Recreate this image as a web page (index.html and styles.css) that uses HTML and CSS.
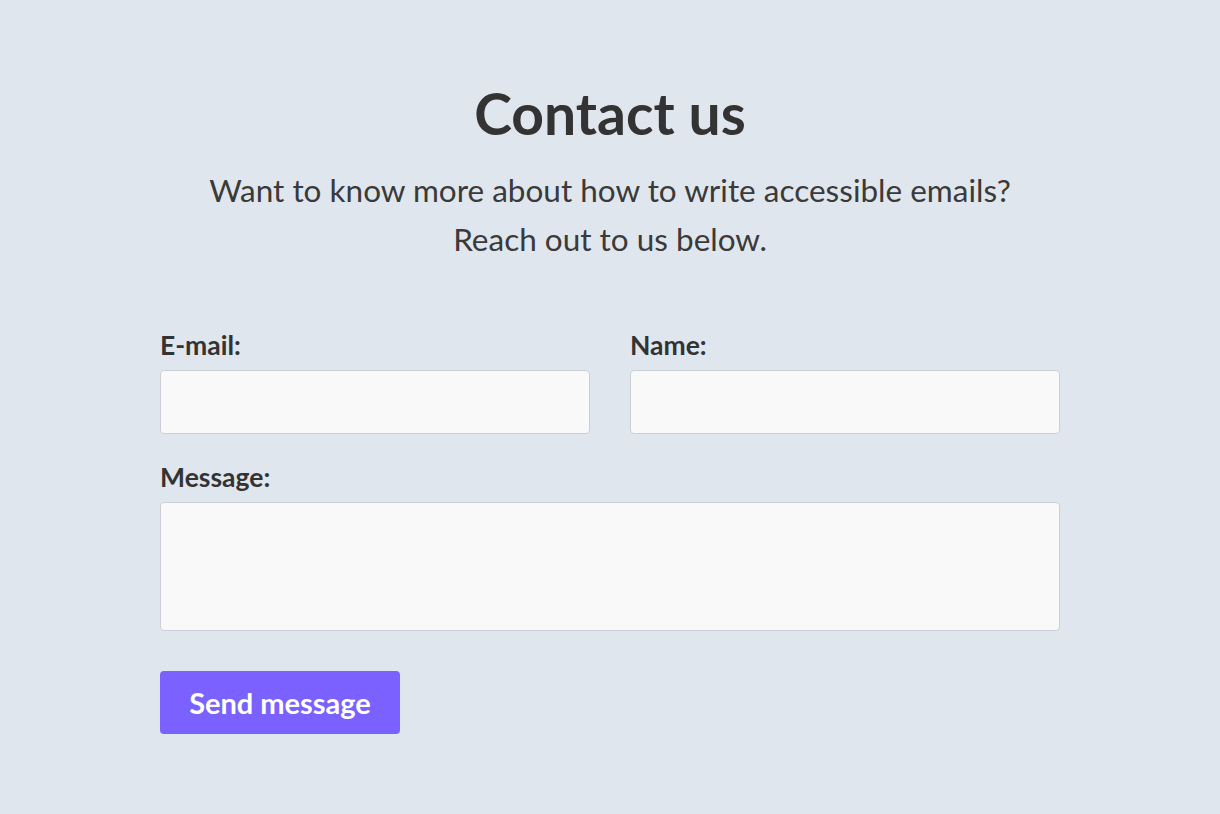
FILE: index.html
```html
<!DOCTYPE html>
<html lang="en">
<head>
  <meta charset="UTF-8">
  <title>Contact us</title>
  <link rel="stylesheet" href="styles.css">
</head>
<body>

  <div class="contact">
    <h1>Contact us</h1>
    <p class="intro">Want to know more about how to write accessible emails?<br>Reach out to us below.</p>

    <form class="form">
      <div class="row">
        <div class="field">
          <label for="email">E-mail:</label>
          <input type="email" id="email">
        </div>
        <div class="field">
          <label for="name">Name:</label>
          <input type="text" id="name">
        </div>
      </div>
      <div class="field">
        <label for="message">Message:</label>
        <textarea id="message"></textarea>
      </div>
      <button type="button">Send message</button>
    </form>
  </div>

</body>
</html>
```

FILE: styles.css
```css
body {
  margin: 0;
  background-color: #e0e6ed;
  color: #333;
  font-family: 'Lato', 'Open Sans', sans-serif;
}
.contact {
  width: 900px;
  margin: 0 auto;
  padding-top: 80px;
}
h1 {
  text-align: center;
  font-size: 57px;
  font-weight: 700;
  margin: 0;
  line-height: 66px;
}
.intro {
  text-align: center;
  font-size: 31.5px;
  line-height: 49px;
  margin: 20px 0 0;
  color: #3a3a3a;
}
.form {
  margin-top: 66px;
}
.row {
  display: flex;
  gap: 40px;
}
.row .field {
  flex: 1;
}
.field {
  margin-bottom: 28px;
}
label {
  display: block;
  font-size: 26.5px;
  font-weight: 700;
  line-height: 30px;
  margin-bottom: 10px;
  color: #333;
}
input, textarea {
  display: block;
  box-sizing: border-box;
  width: 100%;
  height: 64px;
  background-color: #f9f9f9;
  border: 1px solid #ccd0d6;
  border-radius: 4px;
  font-size: 20px;
  padding: 10px 14px;
  font-family: inherit;
  resize: none;
}
textarea {
  height: 129px;
}
button {
  margin-top: 12px;
  width: 240px;
  height: 63px;
  background-color: #7b61ff;
  color: #fff;
  border: none;
  border-radius: 4px;
  font-family: inherit;
  font-size: 29px;
  font-weight: 700;
  cursor: pointer;
}
```
